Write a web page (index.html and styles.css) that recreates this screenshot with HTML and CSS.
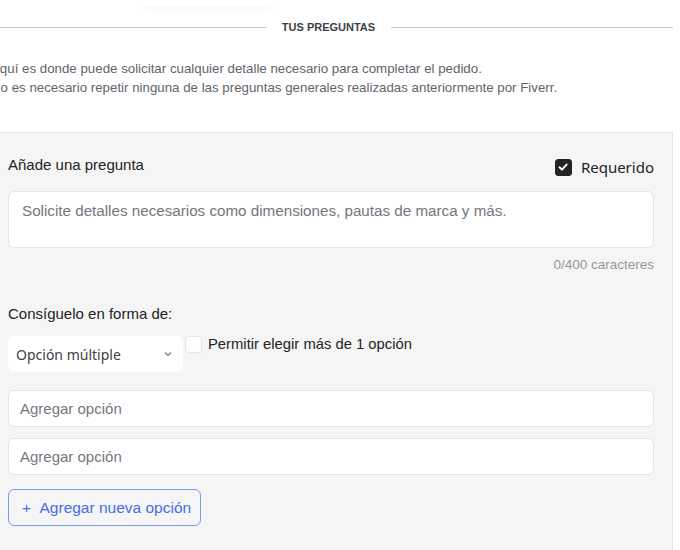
FILE: index.html
```html
<!DOCTYPE html>
<html lang="es">
<head>
    <meta charset="UTF-8">
    <meta name="viewport" content="width=device-width, initial-scale=1.0">
    <title>Tus preguntas</title>
    <link rel="stylesheet" href="styles.css">
</head>
<body>
    <div class="page">
        <div class="top-card"></div>
        <div class="divider">
            <span class="line"></span>
            <h2>TUS PREGUNTAS</h2>
            <span class="line"></span>
        </div>
        <p class="intro">
            Aquí es donde puede solicitar cualquier detalle necesario para completar el pedido.<br>
            No es necesario repetir ninguna de las preguntas generales realizadas anteriormente por Fiverr.
        </p>
        <section class="panel">
            <div class="row-head">
                <label for="pregunta">Añade una pregunta</label>
                <label class="required">
                    <span class="check checked">
                        <svg width="12" height="12" viewBox="0 0 12 12"><path d="M2.5 6.2 5 8.6 9.6 3.6" fill="none" stroke="#fff" stroke-width="2" stroke-linecap="round" stroke-linejoin="round"/></svg>
                    </span>
                    Requerido
                </label>
            </div>
            <textarea id="pregunta" class="question" placeholder="Solicite detalles necesarios como dimensiones, pautas de marca y más."></textarea>
            <div class="counter">0/400 caracteres</div>

            <label class="form-label">Consíguelo en forma de:</label>
            <div class="type-row">
                <div class="select">
                    <span>Opción múltiple</span>
                    <svg width="10" height="10" viewBox="0 0 10 10"><path d="M2 3.5 5 6.5 8 3.5" fill="none" stroke="#74767e" stroke-width="1.2"/></svg>
                </div>
                <label class="multi">
                    <span class="check"></span>
                    Permitir elegir más de 1 opción
                </label>
            </div>

            <input type="text" class="option" placeholder="Agregar opción">
            <input type="text" class="option" placeholder="Agregar opción">

            <button class="add-option"><span class="plus">+</span> Agregar nueva opción</button>
        </section>
    </div>
</body>
</html>
```

FILE: styles.css
```css
body{
    margin: 0;
    padding: 0;
    background-color: white;
    font-family: "Liberation Sans", Arial, sans-serif;
    color: #404145;
    overflow: hidden;
}
.page{
    margin-left: -16px;
    width: 689px;
}
.top-card{
    margin-left: 156px;
    width: 130px;
    height: 6px;
    background-color: white;
    border-radius: 0 0 8px 8px;
    box-shadow: 0 2px 8px rgba(0,0,0,.06);
}
.divider{
    display: flex;
    align-items: center;
    gap: 16px;
    height: 30px;
    margin-top: 6px;
}
.divider .line{
    flex: 1;
    height: 1px;
    background-color: #c5c6c9;
}
.divider h2{
    margin: 0;
    font-size: 11px;
    font-weight: bold;
    color: #404145;
}
.intro{
    margin: 17px 0 0 0;
    padding-left: 7px;
    font-size: 13.3px;
    line-height: 19px;
    color: #62646a;
    height: 73px;
}
.panel{
    background-color: #f5f5f5;
    border-top: 1px solid #e4e5e7;
    border-right: 1px solid #e4e5e7;
    padding: 16px 18px 30px 24px;
    display: flex;
    flex-direction: column;
}
.row-head{
    display: flex;
    justify-content: space-between;
    align-items: center;
    height: 30px;
}
.row-head label{
    font-size: 15px;
    color: #222325;
}
.required{
    display: flex;
    align-items: center;
    gap: 9px;
    font-family: "Noto Sans", sans-serif;
    margin-top: 6px;
}
.check{
    display: inline-flex;
    align-items: center;
    justify-content: center;
    width: 16px;
    height: 16px;
    border-radius: 3px;
    background-color: white;
    border: 1px solid #e4e5e7;
    box-sizing: border-box;
}
.check.checked{
    width: 17px;
    height: 17px;
    background-color: #222325;
    border-color: #222325;
}
.question{
    margin-top: 12px;
    height: 57px;
    resize: none;
    border: 1px solid #e4e5e7;
    border-radius: 6px;
    padding: 10px 13px;
    font-family: inherit;
    font-size: 15.2px;
    box-sizing: border-box;
    outline: none;
}
.question::placeholder, .option::placeholder{
    color: #74767e;
}
.counter{
    text-align: right;
    font-size: 13.5px;
    color: #95979d;
    margin-top: 9px;
}
.form-label{
    margin-top: 33px;
    font-size: 15px;
    color: #222325;
}
.type-row{
    display: flex;
    align-items: flex-start;
    gap: 2px;
    margin-top: 14px;
}
.select{
    width: 175px;
    height: 36px;
    background-color: white;
    border-radius: 6px;
    display: flex;
    align-items: center;
    justify-content: space-between;
    padding: 0 10px 0 8px;
    box-sizing: border-box;
    font-family: "Noto Sans", sans-serif;
    font-size: 14px;
    color: #404145;
}
.multi{
    display: flex;
    align-items: flex-start;
    gap: 6px;
    font-size: 14.8px;
    color: #222325;
}
.multi .check{
    width: 17px;
    height: 17px;
    border-radius: 4px;
}
.option{
    margin-top: 18px;
    height: 37px;
    border: 1px solid #e4e5e7;
    border-radius: 6px;
    padding: 0 11px;
    font-family: inherit;
    font-size: 15px;
    box-sizing: border-box;
    outline: none;
}
.option + .option{
    margin-top: 11px;
}
.add-option{
    align-self: flex-start;
    margin-top: 14px;
    width: 193px;
    height: 37px;
    padding: 0 0 0 13px;
    text-align: left;
    background-color: transparent;
    border: 1px solid #7b9cf0;
    border-radius: 6px;
    color: #446ee7;
    font-family: inherit;
    font-size: 15.5px;
    cursor: pointer;
}
.add-option .plus{
    margin-right: 5px;
}
```
